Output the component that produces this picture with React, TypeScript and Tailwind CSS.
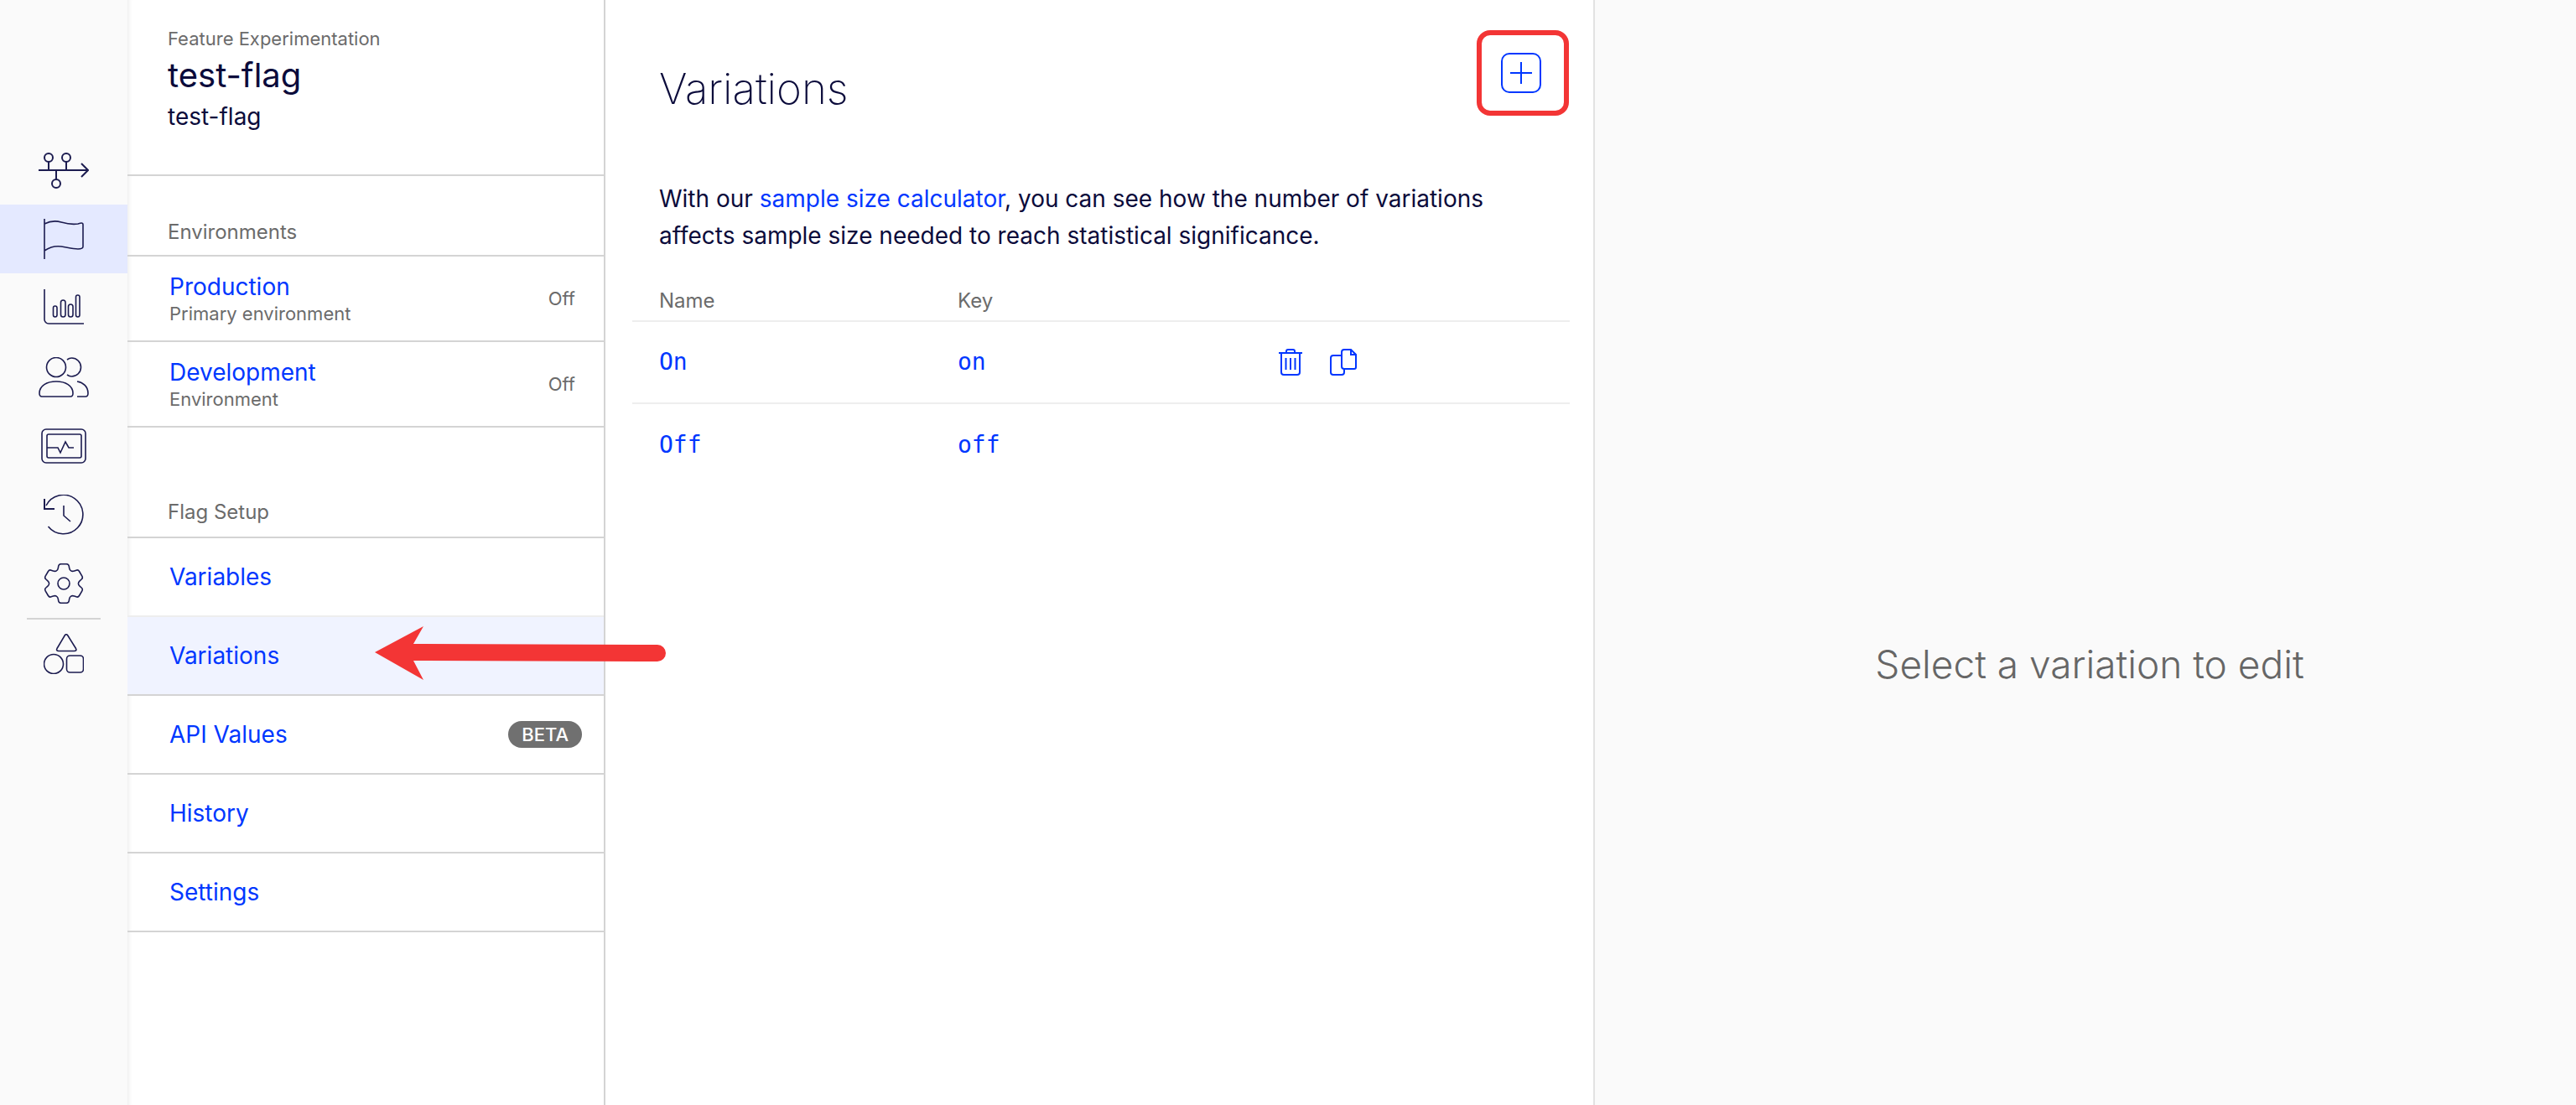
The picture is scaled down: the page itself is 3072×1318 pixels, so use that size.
const ink = "#1c1c50";

// six-toothed gear outline with small rounded corners
function gearPath(cx: number, cy: number) {
  const pts: [number, number][] = [];
  for (let k = 0; k < 6; k++) {
    const a = -90 + k * 60;
    [[17.5, -24], [24, -14], [24, 14], [17.5, 24]].forEach(([r, d]) => {
      const t = ((a + d) * Math.PI) / 180;
      pts.push([cx + r * Math.cos(t), cy + r * Math.sin(t)]);
    });
  }
  let d = "";
  pts.forEach((p, i) => {
    const prev = pts[(i + pts.length - 1) % pts.length];
    const next = pts[(i + 1) % pts.length];
    const toward = (q: [number, number]) => {
      const len = Math.hypot(q[0] - p[0], q[1] - p[1]);
      const s = Math.min(2.5, len / 2) / len;
      return `${p[0] + (q[0] - p[0]) * s} ${p[1] + (q[1] - p[1]) * s}`;
    };
    d += `${i === 0 ? "M" : "L"}${toward(prev)}Q${p[0]} ${p[1]} ${toward(next)}`;
  });
  return d + "Z";
}

function IconTimeline() {
  return (
    <svg width="60" height="44" viewBox="0 0 60 44" fill="none" stroke={ink} strokeWidth="2">
      <path d="M0 22h59M51 14l8 8-8 8" />
      <circle cx="12" cy="7" r="5" />
      <circle cx="33" cy="7" r="5" />
      <circle cx="21" cy="38" r="5" />
      <path d="M12 12v10M33 12v10M21 22v11" />
    </svg>
  );
}

function IconFlag() {
  return (
    <svg width="48" height="48" viewBox="0 0 48 48" fill="none" stroke={ink} strokeWidth="1.6">
      <path d="M1 0v48M1 6c6-3 13-4 20-2s14 3 20 2c3-1 6-2 6 1v26c0 2-3 3-6 3-7 0-13-2-20-3s-14 1-20 5" />
    </svg>
  );
}

function IconChart() {
  return (
    <svg width="48" height="44" viewBox="0 0 48 44" fill="none" stroke={ink} strokeWidth="1.6">
      <path d="M1 0v36a5 5 0 0 0 5 5h42" />
      <rect x="11.500" y="20" width="4.500" height="13" rx="2.250" />
      <rect x="20.500" y="13" width="5.500" height="20" rx="2.750" />
      <rect x="29.500" y="18" width="5.500" height="15" rx="2.750" />
      <rect x="38.500" y="7" width="4.500" height="26" rx="2.250" />
    </svg>
  );
}

function IconUsers() {
  return (
    <svg width="60" height="48" viewBox="0 0 60 48" fill="none" stroke={ink} strokeWidth="1.6">
      <circle cx="21" cy="12" r="11.500" />
      <path d="M34 3c2-1.500 3.500-2 5.500-2a11 11 0 0 1 0 22c-2 0-3.500-.5-5.500-2" />
      <path d="M1 43c0-9 9-14 20-14s20 5 20 14c0 3-1 4-3 4H4c-2 0-3-1-3-4z" />
      <path d="M46 29c7 1 13 6 13 14 0 3-1 4-3 4H46" />
    </svg>
  );
}

function IconMonitor() {
  return (
    <svg width="54" height="42" viewBox="0 0 54 42" fill="none" stroke={ink} strokeWidth="1.6">
      <rect x="1" y="1" width="52" height="40" rx="5" />
      <rect x="7" y="7" width="41" height="28" rx="2" />
      <path d="M7 23h13l3 6 6-13 4 7h6" />
    </svg>
  );
}

function IconHistory() {
  return (
    <svg width="48" height="48" viewBox="0 0 48 48" fill="none" stroke={ink} strokeWidth="1.6">
      <path d="M3 13A23.200 23.200 0 1 1 5.500 38" />
      <path d="M1 5v12h12" strokeWidth="2" />
      <path d="M24 13v12l8 7" />
    </svg>
  );
}

function IconGear() {
  return (
    <svg width="48" height="48" viewBox="0 0 48 48" fill="none" stroke={ink} strokeWidth="1.600">
      <circle cx="24" cy="24" r="7" />
      <path d={gearPath(24, 24)} />
    </svg>
  );
}

function IconShapes() {
  return (
    <svg width="48" height="48" viewBox="0 0 48 48" fill="none" stroke={ink} strokeWidth="1.6">
      <path d="M25.500 1.500c1-1 2-1 3 0l10 16c1 2 0 3-2 3H18c-2 0-3-1-2-3z" strokeLinejoin="round" />
      <circle cx="12" cy="36" r="11.500" />
      <rect x="27.500" y="26" width="20" height="20" rx="4" />
    </svg>
  );
}

function IconTrash() {
  return (
    <svg width="28" height="32" viewBox="0 0 28 32" fill="none" stroke="#0037ff" strokeWidth="2">
      <path d="M0 5h28M9 5V3a2 2 0 0 1 2-2h6a2 2 0 0 1 2 2v2" />
      <path d="M3 5v23a3 3 0 0 0 3 3h16a3 3 0 0 0 3-3V5" />
      <path d="M8.500 11v14M14 11v14M19.500 11v14" />
    </svg>
  );
}

function IconCopy() {
  return (
    <svg width="32" height="32" viewBox="0 0 32 32" fill="none" stroke="#0037ff" strokeWidth="2">
      <path d="M14 8H4a3 3 0 0 0-3 3v17a3 3 0 0 0 3 3h10a3 3 0 0 0 3-3v-3" />
      <path d="M17 1h8l6 6v15a2 2 0 0 1-2 2H17a3 3 0 0 1-3-3V4a3 3 0 0 1 3-3z" />
      <path d="M25 1v6h6" />
    </svg>
  );
}

const railItems = [
  { icon: <IconTimeline />, active: false },
  { icon: <IconFlag />, active: true },
  { icon: <IconChart />, active: false },
  { icon: <IconUsers />, active: false },
  { icon: <IconMonitor />, active: false },
  { icon: <IconHistory />, active: false },
  { icon: <IconGear />, active: false },
];

const envs = [
  { name: "Production", desc: "Primary environment" },
  { name: "Development", desc: "Environment" },
];

const setup = ["Variables", "Variations", "API Values", "History", "Settings"];

export default function App() {
  return (
    <div className="relative flex h-[1318px] w-[3072px] overflow-hidden bg-white font-['Inter',sans-serif] text-[#0b0b3b]">
      <nav className="flex w-[152px] shrink-0 flex-col bg-[#fafafa] pt-[162px]">
        {railItems.map((item, i) => (
          <div
            key={i}
            className={`flex h-[82.2px] items-center justify-center ${item.active ? "bg-[#e4e9ff]" : ""}`}
          >
            {item.icon}
          </div>
        ))}
        <div className="mx-[32px] h-[2px] bg-[#d4d4d4]" />
        <div className="mt-[17px] flex justify-center">
          <IconShapes />
        </div>
      </nav>

      <aside className="relative flex h-full w-[570px] shrink-0 flex-col border-r-2 border-[#d4d4d4] shadow-[inset_6px_0_6px_-6px_rgba(0,0,0,0.12)]">
        <div className="h-[210px] border-b-2 border-[#d4d4d4] pl-[48px] pt-[32px]">
          <div className="text-[22px] leading-[28px] text-[#6b6b6b]">Feature Experimentation</div>
          <div className="mt-[5px] text-[40px] leading-[50px]">test-flag</div>
          <div className="mt-[6px] text-[28px] leading-[36px]">test-flag</div>
        </div>

        <div className="flex h-[96px] items-end border-b-2 border-[#d4d4d4] pb-[12px] pl-[48px] text-[24px] leading-[30px] text-[#6b6b6b]">
          Environments
        </div>
        {envs.map((env) => (
          <div key={env.name} className="flex h-[102px] items-center justify-between border-b-2 border-[#d4d4d4] pl-[50px] pr-[34px]">
            <div>
              <div className="text-[28px] leading-[36px] text-[#0037ff]">{env.name}</div>
              <div className="text-[22px] leading-[28px] text-[#6b6b6b]">{env.desc}</div>
            </div>
            <div className="text-[22px] text-[#6b6b6b]">Off</div>
          </div>
        ))}

        <div className="flex h-[132px] items-end border-b-2 border-[#d4d4d4] pb-[14px] pl-[48px] text-[24px] leading-[30px] text-[#6b6b6b]">
          Flag Setup
        </div>
        {setup.map((label) => (
          <div
            key={label}
            className={`flex h-[94px] items-center justify-between border-b-2 pl-[50px] pr-[26px] text-[28px] text-[#0037ff] ${label === "Variables" ? "border-[#eeeeee]" : "border-[#d4d4d4]"} ${label === "Variations" ? "bg-[#f0f3ff]" : ""}`}
          >
            {label}
            {label === "API Values" && (
              <span className="rounded-full bg-[#707070] px-[16px] py-[2px] text-[22px] font-medium leading-[28px] text-white">
                BETA
              </span>
            )}
          </div>
        ))}
      </aside>

      <main className="relative w-[1178px] shrink-0 pl-[32px] pr-[28px]">
        <div className="h-[215px] px-[32px] pt-[74px]">
          <h1 className="text-[51px] font-extralight leading-[64px]">Variations</h1>
        </div>
        <p className="px-[32px] text-[28px] leading-[44px]">
          With our <span className="text-[#0037ff]">sample size calculator</span>, you can see how the number of variations
          <br />
          affects sample size needed to reach statistical significance.
        </p>
        <div className="mt-[35px] flex h-[46px] items-center border-b-2 border-[#eeeeee] px-[32px] pb-[2px] text-[24px] text-[#6b6b6b]">
          <div className="w-[356px]">Name</div>
          <div>Key</div>
        </div>
        {[
          { name: "On", key: "on", actions: true },
          { name: "Off", key: "off", actions: false },
        ].map((row) => (
          <div
            key={row.key}
            className={`flex h-[98px] items-center px-[32px] font-['DejaVu_Sans_Mono',monospace] text-[28px] font-light text-[#0037ff] ${row.actions ? "border-b-2 border-[#eeeeee]" : ""}`}
          >
            <div className="w-[356px]">{row.name}</div>
            <div className="w-[383px]">{row.key}</div>
            {row.actions && (
              <div className="flex items-center gap-[33px]">
                <IconTrash />
                <IconCopy />
              </div>
            )}
          </div>
        ))}
      </main>

      <section className="flex flex-1 items-center justify-center border-l-2 border-[#e2e2e2] bg-[#fafafa] pl-[10px] text-[46px] font-light text-[#666666]">
        <span className="relative top-[133px]">Select a variation to edit</span>
      </section>

      {/* annotations on top of the screenshot */}
      <div className="absolute left-[1761px] top-[36px] flex h-[102px] w-[110px] items-center justify-center rounded-[16px] border-[6px] border-[#f33535] bg-white pr-[4px]">
        <svg width="48" height="48" viewBox="0 0 48 48" fill="none" stroke="#0037ff" strokeWidth="2">
          <rect x="1" y="1" width="46" height="46" rx="9" />
          <path d="M24 11v26M11 24h26" />
        </svg>
      </div>
      <svg className="absolute left-[440px] top-[740px]" width="360" height="72" viewBox="0 0 360 72" fill="none">
        <path
          d="M7 38L65 7 53 28 344 29a10 10 0 0 1 0 20L53 48 65 71z"
          fill="#f33535"
        />
      </svg>
    </div>
  );
}
